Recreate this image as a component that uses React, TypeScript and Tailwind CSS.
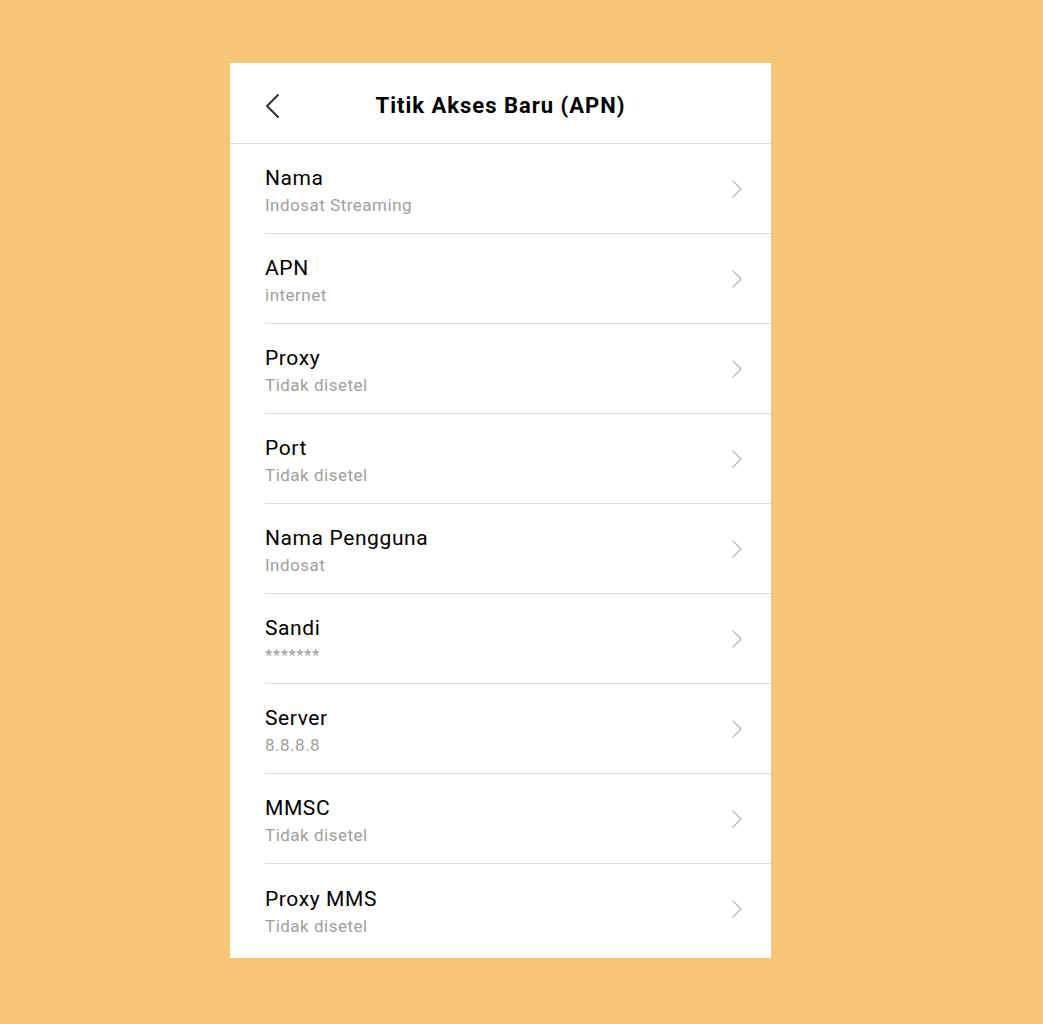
const rows = [
  { label: 'Nama', value: 'Indosat Streaming' },
  { label: 'APN', value: 'internet' },
  { label: 'Proxy', value: 'Tidak disetel' },
  { label: 'Port', value: 'Tidak disetel' },
  { label: 'Nama Pengguna', value: 'Indosat' },
  { label: 'Sandi', value: '*******' },
  { label: 'Server', value: '8.8.8.8' },
  { label: 'MMSC', value: 'Tidak disetel' },
  { label: 'Proxy MMS', value: 'Tidak disetel' },
];

const ChevronRight = () => (
  <svg width="12" height="20" viewBox="0 0 12 20" fill="none" className="shrink-0">
    <path d="M2 2 L10 10 L2 18" stroke="#bdbdbd" strokeWidth="1.5" strokeLinecap="round" strokeLinejoin="round" />
  </svg>
);

const App = () => {
  return (
    <div className="min-h-screen w-full bg-[#f8c677] pt-[63px] pb-[66px] font-['Roboto',sans-serif]">
      <div className="ml-[230px] w-[541px] bg-white pb-[4px]">
        <div className="relative flex h-[81px] items-center justify-center border-b border-[#dcdcdc] pt-[5px]">
          <svg
            width="16"
            height="26"
            viewBox="0 0 16 26"
            fill="none"
            className="absolute left-[34px] top-[30px]"
          >
            <path d="M14 2 L3 13 L14 24" stroke="#333333" strokeWidth="2" strokeLinecap="round" strokeLinejoin="round" />
          </svg>
          <h1 className="text-[22px] font-bold leading-none tracking-[1px] text-black">Titik Akses Baru (APN)</h1>
        </div>
        <ul className="pl-[35px]">
          {rows.map((row, i) => (
            <li
              key={row.label}
              className={`flex h-[90px] items-center pr-[28px] ${i < rows.length - 1 ? 'border-b border-[#dcdcdc]' : ''}`}
            >
              <div className="flex flex-1 flex-col pt-[5px]">
                <span className="text-[21px] leading-[26px] tracking-[0.6px] text-black">{row.label}</span>
                <span className="mt-[2px] text-[17px] leading-[24px] tracking-[0.5px] text-[#a0a0a0]">{row.value}</span>
              </div>
              <ChevronRight />
            </li>
          ))}
        </ul>
      </div>
    </div>
  );
};

export default App;
